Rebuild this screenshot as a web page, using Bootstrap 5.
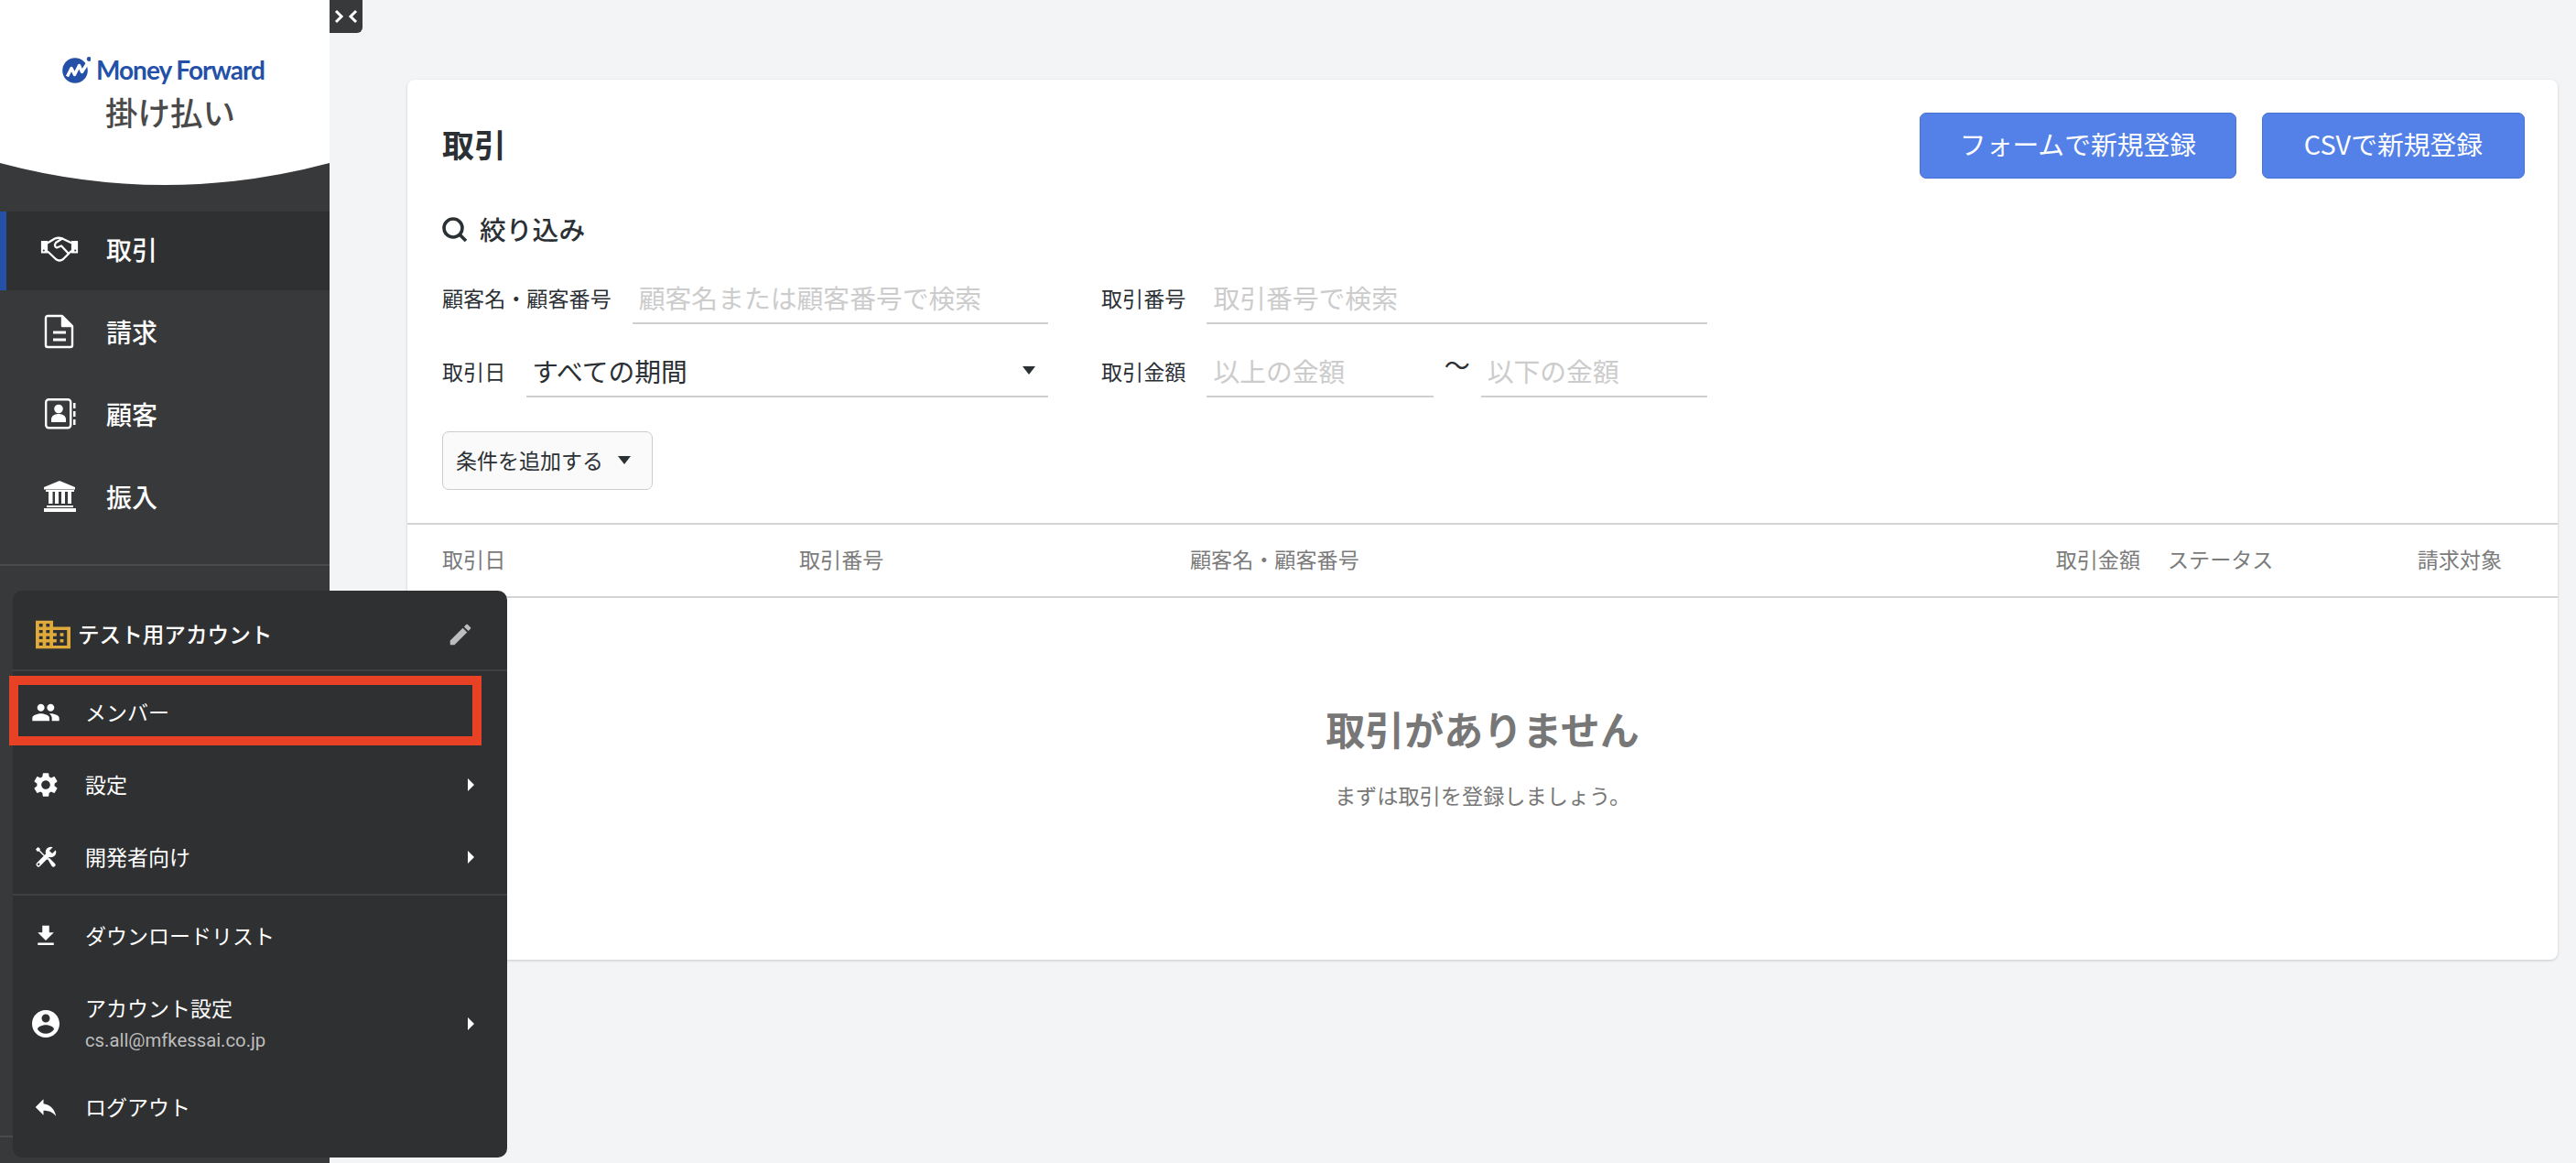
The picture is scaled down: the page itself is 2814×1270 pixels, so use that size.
<!DOCTYPE html>
<html lang="ja">
<head>
<meta charset="utf-8">
<title>取引</title>
<link href="https://cdn.jsdelivr.net/npm/bootstrap@5.3.0/dist/css/bootstrap.min.css" rel="stylesheet">
<style>
html,body{height:100%}
body{background:#f3f4f6;font-family:"Noto Sans CJK JP","Noto Sans",sans-serif;color:#2b3034;font-size:23px;overflow:hidden}
.page-wrap{height:1270px}
.side{width:360px;background:#38393b;color:#fff;flex:none}
.toggler{left:360px;top:0;width:36px;height:36px;background:#38393b;border-bottom-right-radius:6px}
.brand-top{height:178px;background:#fff;padding-top:60px}
.curve{display:block;width:360px;height:24px}
.brand-logo{height:32px;margin-left:68px;gap:6px;color:#2450a8}
.brand-name{font-family:"Lato",sans-serif;font-weight:700;font-size:28px;line-height:32px;letter-spacing:-1px;white-space:nowrap}
.brand-sub{font-size:35.500px;line-height:36px;font-weight:500;color:#4a4a4a;text-align:center;margin:12px 0 0 12px}
.side-nav{margin-top:29px;border-bottom:2px solid #4a4b4d;height:387px}
.side-link{height:86px;margin-bottom:4px;padding-bottom:4px;color:#fff;text-decoration:none;font-size:28px;font-weight:500;line-height:1;border-left:7px solid transparent}
.side-link.is-active{background:#2f3032;border-left-color:#2450a8}
.side-ico{width:109px;flex:none;padding-left:37px;display:flex;align-items:center}
.side-ico svg{display:block}
.side-foot{margin-top:622px;border-top:2px solid #4a4b4d}
.main-area{flex:1;min-width:0;padding:87px 20px 0 85px}
.deal-card{height:961px;border:0;border-radius:8px;box-shadow:0 1px 3px rgba(0,0,0,.18)}
.card-pad{padding:36px 36px 0 38px}
.title-main{font-size:35px;font-weight:700;line-height:68px;margin:0}
.btn-pair{gap:28px}
.blue-btn{height:72px;padding:0 0 4px;font-size:28.8px;line-height:1;background:#5381e8;border:1px solid #4a72d6;color:#fff;border-radius:7px;white-space:nowrap}
.blue-btn.w-form{width:346px}
.blue-btn.w-csv{width:287px}
.filter-head{margin-top:35px;height:40px;gap:13px;font-size:28.8px;font-weight:500;line-height:40px}
.filter-row{height:60px;gap:58px}
.filter-row.one{margin-top:24px}
.filter-row.two{margin-top:20px}
.field{width:662px;gap:23px}
.field-lbl{white-space:nowrap;line-height:1;padding-top:3px;align-self:center;font-size:23.100px}
.field-input{flex:1;min-width:0;height:60px;padding:2px 7px 0 7px;font-size:28.8px;border:0;border-bottom:2px solid #cfcfcf;border-radius:0;background:transparent;box-shadow:none;color:#2b3034}
.field-input::placeholder{color:#ccc;opacity:1}
.field-sel{flex:1;height:60px;padding:3px 14px 0 6px;font-size:28.8px;border:0;border-bottom:2px solid #cfcfcf;background:transparent;color:#2b3034;display:flex;align-items:center;justify-content:space-between}
.dropdown-toggle.big-caret::after{margin:0;border-top:9px solid #2b3034;border-left:7.5px solid transparent;border-right:7.5px solid transparent;border-bottom:0}
.tilde{width:52px;flex:none;text-align:center;font-size:28px;line-height:1;align-self:flex-start;padding-top:10px}
.add-btn{margin-top:37px;height:64px;width:230px;padding:0 0 2px 14px;gap:16px;background:#fafafa;border:1px solid #ccc;border-radius:7px;font-size:23px;color:#2b3034}
.deal-table{margin:36px 0 0;table-layout:fixed;width:100%}
.deal-table th{height:80px;padding:0 15px 3px;vertical-align:middle;font-weight:400;font-size:23.100px;color:#7b7b7b;border-top:2px solid #d4d4d4;border-bottom:2px solid #d4d4d4;background:transparent;white-space:nowrap}
.deal-table th:first-child{padding-left:38px}
.deal-table th:last-child{padding-right:61px}
.empty-wrap{padding-top:119px;color:#777}
.empty-title{font-size:43px;font-weight:700;line-height:46px;margin:0}
.empty-sub{font-size:23.200px;line-height:30px;margin:35px 0 0}
.pop-menu{left:14px;top:645px;width:540px;height:619px;background:#2f3032;border-radius:10px;color:#fff;z-index:5}
.pop-head{height:88px;padding:10px 36px 0 25px;border-bottom:2px solid #3f4042;font-weight:500;font-size:23.600px}
.pop-head-name{margin-left:10px}
.pop-list{--bs-list-group-bg:transparent;--bs-list-group-color:#fff;--bs-list-group-border-width:0;border-radius:0}
.pop-item{height:79px;padding:0 36px 0 14px;background:transparent;color:#fff;display:flex;align-items:center;font-size:23px;line-height:1.2}
.pop-ico{width:44px;height:44px;margin-right:21px;flex:none;display:flex;align-items:center;justify-content:center}
.pop-arrow{margin-left:auto;width:0;height:0;border-left:7px solid #fff;border-top:7px solid transparent;border-bottom:7px solid transparent}
.pop-mail{font-family:Roboto,sans-serif;font-size:20.3px;color:#bdbdbd;margin-top:11px;line-height:1}
.pop-acct{padding-bottom:3px}
.group-a{padding:5px 0 1px}
.group-b{border-top:2px solid #3f4042}
.mark-box{left:-4px;top:5px;width:516px;height:76px;border:10px solid #e94126;pointer-events:none}
.head-building{width:38px;height:34px;margin-right:-2px}
</style>
</head>
<body>
<div class="page-wrap d-flex position-relative">
  <aside class="side">
    <div class="brand-top">
      <div class="brand-logo d-flex align-items-center">
        <svg width="31" height="29" viewBox="0 0 31 29" aria-hidden="true"><circle cx="14" cy="15" r="13.800" fill="#2450a8"/><path d="M5.500 21.500L10 12.500l3.500 7L18.500 9.500l3 7L29 5" fill="none" stroke="#fff" stroke-width="3.400" stroke-linejoin="round"/><circle cx="29.200" cy="2.500" r="2.400" fill="#2450a8"/></svg>
        <span class="brand-name">Money Forward</span>
      </div>
      <div class="brand-sub">掛け払い</div>
    </div>
    <svg class="curve" viewBox="0 0 360 24" preserveAspectRatio="none" aria-hidden="true"><path d="M0 0H360Q180 48 0 0Z" fill="#fff"/></svg>
    <nav class="side-nav">
      <a class="side-link is-active d-flex align-items-center" href="#"><span class="side-ico">
        <svg width="42" height="28" viewBox="9 10 42 28" fill="none" stroke="#fff" stroke-width="2.300" stroke-linejoin="round" stroke-linecap="round" aria-hidden="true"><path d="M10.500 15.500h6v12.500h-6zM43.500 15.500h6v12.500h-6z" fill="#fff" stroke-width="1.200"/><path d="M17.500 17L25 12.500Q29 11 33 12.500L42.500 17M17.500 27l8.500 8Q30 38 34 35l8.500-8.500"/><path d="M33 12.500L26 17Q23.500 21 27 22.500L32 20.500 39.500 28.500"/><circle cx="12.800" cy="25.500" r="1" fill="#2f3032" stroke="none"/><circle cx="47.200" cy="25.500" r="1" fill="#2f3032" stroke="none"/></svg>
      </span>取引</a>
      <a class="side-link d-flex align-items-center" href="#"><span class="side-ico">
        <svg width="42" height="38" viewBox="0 0 42 38" fill="none" stroke="#fff" stroke-width="2.400" stroke-linejoin="round" aria-hidden="true"><path d="M8 2h16l11 11v21c0 1-1 2-2 2H8c-1 0-2-1-2-2V4c0-1 1-2 2-2z"/><path d="M24 2v11h11" fill="#fff"/><path d="M14 20h14M14 28h14" stroke-width="3.200"/></svg>
      </span>請求</a>
      <a class="side-link d-flex align-items-center" href="#"><span class="side-ico">
        <svg width="42" height="34" viewBox="0 0 42 34" fill="none" aria-hidden="true"><rect x="6.200" y="1.200" width="27" height="31" rx="3" stroke="#fff" stroke-width="2.400"/><circle cx="20" cy="11.500" r="4.800" fill="#fff"/><path d="M12 26v-3c0-4 4-6 8-6s8 2 8 6v3z" fill="#fff"/><path d="M36 5h2.500v6H36zM36 14h2.500v6H36zM36 23h2.500v6H36z" fill="#fff"/></svg>
      </span>顧客</a>
      <a class="side-link d-flex align-items-center" href="#"><span class="side-ico">
        <svg width="42" height="34" viewBox="0 0 42 34" fill="#fff" aria-hidden="true"><path d="M21 0l17 7v2.500H4V7zM4 30h35v4H4zM7 27h29v2H7zM9 11h4.500v14H9zM16 11h4v14h-4zM23 11h4v14h-4zM30 11h4v14h-4zM6 10h31v2H6z"/></svg>
      </span>振入</a>
    </nav>
    <div class="side-foot"></div>
  </aside>

  <button type="button" class="toggler position-absolute border-0 p-0 d-flex align-items-center justify-content-center" aria-label="開閉">
    <svg width="30" height="16" viewBox="0 0 30 16" fill="none" stroke="#fff" stroke-width="3" aria-hidden="true"><path d="M4 2l6 6-6 6M26 2l-6 6 6 6"/></svg>
  </button>

  <main class="main-area">
    <div class="card deal-card">
      <div class="card-pad">
        <div class="d-flex justify-content-between">
          <h1 class="title-main">取引</h1>
          <div class="d-flex btn-pair">
            <button type="button" class="btn blue-btn w-form">フォームで新規登録</button>
            <button type="button" class="btn blue-btn w-csv">CSVで新規登録</button>
          </div>
        </div>
        <div class="filter-head d-flex align-items-center">
          <svg width="28" height="27" viewBox="0 0 28 27" fill="none" stroke="#2b3034" stroke-width="3.600" aria-hidden="true"><circle cx="12" cy="12" r="10"/><path d="M19 19l7 7"/></svg>
          <span>絞り込み</span>
        </div>
        <div class="filter-row one d-flex">
          <div class="field d-flex"><span class="field-lbl">顧客名・顧客番号</span><input class="form-control field-input" placeholder="顧客名または顧客番号で検索"></div>
          <div class="field d-flex"><span class="field-lbl">取引番号</span><input class="form-control field-input" placeholder="取引番号で検索"></div>
        </div>
        <div class="filter-row two d-flex">
          <div class="field d-flex"><span class="field-lbl">取引日</span><button type="button" class="field-sel dropdown-toggle big-caret">すべての期間</button></div>
          <div class="field d-flex"><span class="field-lbl">取引金額</span>
            <div class="d-flex flex-grow-1">
              <input class="form-control field-input" placeholder="以上の金額">
              <span class="tilde">〜</span>
              <input class="form-control field-input" placeholder="以下の金額">
            </div>
          </div>
        </div>
        <button type="button" class="btn add-btn d-flex align-items-center dropdown-toggle big-caret">条件を追加する</button>
      </div>
      <table class="table deal-table">
        <colgroup><col style="width:413px"><col style="width:427px"><col style="width:815px"><col style="width:253px"><col style="width:207px"><col></colgroup>
        <thead><tr><th>取引日</th><th>取引番号</th><th>顧客名・顧客番号</th><th class="text-end">取引金額</th><th>ステータス</th><th class="text-end">請求対象</th></tr></thead>
      </table>
      <div class="empty-wrap text-center">
        <h2 class="empty-title">取引がありません</h2>
        <p class="empty-sub">まずは取引を登録しましょう。</p>
      </div>
    </div>
  </main>

  <div class="pop-menu position-absolute">
    <div class="pop-head d-flex align-items-center">
      <svg class="head-building" viewBox="2 2 20 20" preserveAspectRatio="none" fill="#e0a93b" aria-hidden="true"><path d="M12 7V3H2v18h20V7H12zM6 19H4v-2h2v2zm0-4H4v-2h2v2zm0-4H4V9h2v2zm0-4H4V5h2v2zm4 12H8v-2h2v2zm0-4H8v-2h2v2zm0-4H8V9h2v2zm0-4H8V5h2v2zm10 12h-8v-2h2v-2h-2v-2h2v-2h-2V9h8v10zm-2-8h-2v2h2v-2zm0 4h-2v2h2v-2z"/></svg>
      <span class="pop-head-name">テスト用アカウント</span>
      <svg class="ms-auto" width="30" height="30" viewBox="0 0 24 24" fill="#bdbdbd" aria-hidden="true"><path d="M3 17.250V21h3.750L17.810 9.940l-3.750-3.750L3 17.250zM20.710 7.040c.390-.390.390-1.020 0-1.410l-2.340-2.340c-.390-.390-1.020-.390-1.410 0l-1.830 1.830 3.750 3.750 1.830-1.830z"/></svg>
    </div>
    <div class="position-relative group-a">
      <div class="mark-box position-absolute"></div>
      <div class="list-group pop-list">
        <a href="#" class="list-group-item pop-item"><span class="pop-ico"><svg width="32" height="32" viewBox="0 0 24 24" fill="#fff" aria-hidden="true"><path d="M16 11c1.660 0 2.990-1.340 2.990-3S17.660 5 16 5c-1.660 0-3 1.340-3 3s1.340 3 3 3zm-8 0c1.660 0 2.990-1.340 2.990-3S9.660 5 8 5C6.340 5 5 6.340 5 8s1.340 3 3 3zm0 2c-2.330 0-7 1.170-7 3.500V19h14v-2.500c0-2.330-4.670-3.500-7-3.500zm8 0c-.290 0-.620.020-.970.050 1.160.840 1.970 1.970 1.970 3.450V19h6v-2.500c0-2.330-4.670-3.500-7-3.500z"/></svg></span>メンバー</a>
        <a href="#" class="list-group-item pop-item"><span class="pop-ico"><svg width="32" height="32" viewBox="0 0 24 24" fill="#fff" aria-hidden="true"><path d="M19.140 12.940c.040-.300.060-.610.060-.940 0-.320-.020-.640-.070-.940l2.030-1.580c.180-.140.230-.410.120-.610l-1.920-3.320c-.120-.220-.370-.290-.590-.220l-2.390.960c-.500-.380-1.030-.700-1.620-.940l-.360-2.540c-.040-.240-.240-.410-.480-.410h-3.840c-.240 0-.430.170-.470.410l-.360 2.540c-.590.240-1.130.570-1.620.940l-2.390-.960c-.220-.080-.470 0-.590.220L2.740 8.870c-.120.210-.080.470.120.610l2.030 1.580c-.050.300-.090.630-.090.940s.020.640.07.940l-2.030 1.580c-.180.140-.230.410-.120.610l1.920 3.320c.120.220.370.290.590.220l2.390-.960c.500.380 1.030.700 1.620.940l.360 2.540c.050.240.240.410.480.410h3.840c.240 0 .440-.170.470-.410l.360-2.540c.590-.240 1.130-.560 1.620-.940l2.390.960c.220.080.470 0 .590-.220l1.920-3.320c.120-.220.070-.470-.120-.610l-2.010-1.580zM12 15.600c-1.980 0-3.600-1.620-3.600-3.600s1.620-3.600 3.600-3.600 3.600 1.620 3.600 3.600-1.620 3.600-3.600 3.600z"/></svg></span>設定<span class="pop-arrow"></span></a>
        <a href="#" class="list-group-item pop-item"><span class="pop-ico"><svg width="24" height="24" viewBox="0 0 24 24" fill="none" aria-hidden="true"><path d="M4 20L14 10" stroke="#fff" stroke-width="5" stroke-linecap="round"/><circle cx="17.500" cy="6.500" r="5.800" fill="#fff"/><path d="M17.500 6.500L24 0" stroke="#2f3032" stroke-width="4.500"/><circle cx="4.200" cy="19.800" r="1.200" fill="#2f3032"/><path d="M1 3.500L3.500 1l2.500 2-.5 1.500L15 14l-1 1L4.500 5.500 3 6z" fill="#fff"/><path d="M14 14l1.500-1.500L22 19c1 1.500 1 2-.5 3.200-1 .8-1.800.8-3-.5z" fill="#fff"/></svg></span>開発者向け<span class="pop-arrow"></span></a>
      </div>
    </div>
    <div class="group-b">
      <div class="list-group pop-list">
        <a href="#" class="list-group-item pop-item" style="height:88px"><span class="pop-ico"><svg width="30" height="32" viewBox="0 0 24 24" fill="#fff" aria-hidden="true"><path d="M19 9h-4V3H9v6H5l7 7 7-7zM5 18v2h14v-2H5z"/></svg></span>ダウンロードリスト</a>
        <a href="#" class="list-group-item pop-item" style="height:104px"><span class="pop-ico"><svg width="30" height="30" viewBox="2 2 20 20" fill="#fff" aria-hidden="true"><path d="M12 2C6.480 2 2 6.480 2 12s4.480 10 10 10 10-4.480 10-10S17.520 2 12 2zm0 3c1.660 0 3 1.340 3 3s-1.340 3-3 3-3-1.340-3-3 1.340-3 3-3zm0 14.200c-2.500 0-4.710-1.280-6-3.220.030-1.990 4-3.080 6-3.080 1.990 0 5.970 1.090 6 3.080-1.290 1.940-3.500 3.220-6 3.220z"/></svg></span><span class="pop-acct"><span class="d-block">アカウント設定</span><span class="d-block pop-mail">cs.all@mfkessai.co.jp</span></span><span class="pop-arrow"></span></a>
        <a href="#" class="list-group-item pop-item" style="height:78px"><span class="pop-ico"><svg width="30" height="30" viewBox="0 0 24 24" fill="#fff" aria-hidden="true"><path d="M10 9V5l-7 7 7 7v-4.100c5 0 8.500 1.600 11 5.100-1-5-4-10-11-11z"/></svg></span>ログアウト</a>
      </div>
    </div>
  </div>
</div>
<script src="https://cdn.jsdelivr.net/npm/bootstrap@5.3.0/dist/js/bootstrap.bundle.min.js"></script>
</body>
</html>
